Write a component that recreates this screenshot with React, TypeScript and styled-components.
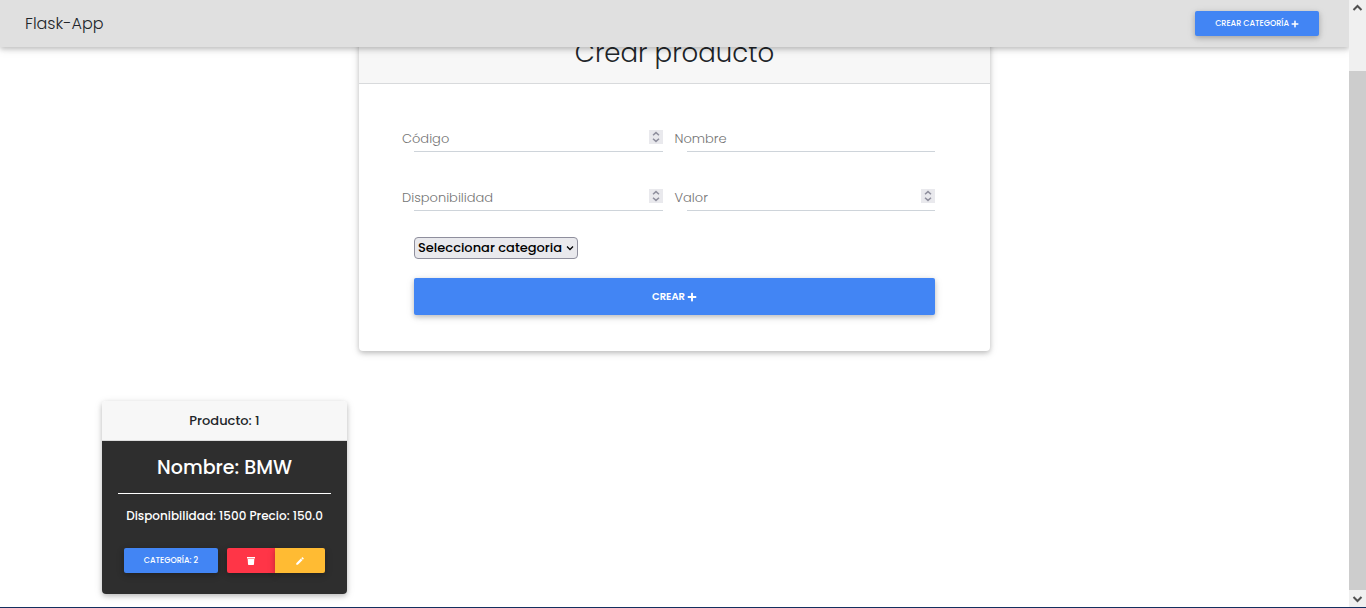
import React from "react";
import styled, { createGlobalStyle, css } from "styled-components";
import { FaPlus } from "react-icons/fa";
import { MdEdit } from "react-icons/md";

const GlobalStyle = createGlobalStyle`
  *, *::before, *::after { box-sizing: border-box; }
  body {
    margin: 0;
    background: #fff;
    color: #212529;
    font-family: Poppins, Inter, "Open Sans", sans-serif;
    font-size: 13px;
    font-weight: 300;
  }
  h1, h2, h3, p { margin: 0; }
`;

const shadow = css`
  box-shadow: 0 2px 5px 0 rgba(0, 0, 0, 0.2), 0 2px 10px 0 rgba(0, 0, 0, 0.1);
`;

const Page = styled.div`
  display: flex;
  min-height: 100vh;
  border-bottom: 1px solid #14305f;
`;

const Content = styled.div`
  flex: 1;
  min-width: 0;
`;

const Navbar = styled.header`
  position: sticky;
  top: 0;
  z-index: 2;
  display: flex;
  align-items: center;
  justify-content: space-between;
  height: 47px;
  padding: 0 30px 0 25px;
  background: #e0e0e0;
  ${shadow}
`;

const Brand = styled.a`
  color: #212529;
  font-size: 16px;
  line-height: 24px;
  text-decoration: none;
`;

const tones = { primary: "#4285f4", danger: "#ff3547", warning: "#ffbb33" };

const Button = styled.button<{ $tone?: keyof typeof tones; $block?: boolean }>`
  display: flex;
  align-items: center;
  justify-content: center;
  gap: 2px;
  width: ${(p) => (p.$block ? "100%" : "auto")};
  height: ${(p) => (p.$block ? 37 : 25)}px;
  padding: 0 20px;
  border: 0;
  border-radius: 2px;
  background: ${(p) => tones[p.$tone ?? "primary"]};
  color: #fff;
  font: inherit;
  font-size: ${(p) => (p.$block ? 10 : 8)}px;
  font-weight: ${(p) => (p.$block ? 600 : 500)};
  line-height: 16px;
  white-space: nowrap;
  cursor: pointer;
  ${shadow}
`;

const Main = styled.main`
  margin-top: -24px;
  padding: 0 24px 13px;
`;

const FormCard = styled.section`
  max-width: 631px;
  margin: 0 auto;
  border-radius: 4px;
  background: #fff;
  ${shadow}
`;

const FormHeader = styled.div`
  padding: 12px 20px;
  border-bottom: 1px solid #d8dadc;
  background: #f7f7f7;
  text-align: center;
`;

const Title = styled.h1`
  font-size: 26px;
  font-weight: 300;
  line-height: 36px;
`;

const Form = styled.form`
  display: grid;
  grid-template-columns: minmax(0, 1fr) minmax(0, 1fr);
  column-gap: 24px;
  row-gap: 30px;
  padding: 39px 55px 36px;
`;

const Field = styled.div`
  display: flex;
  align-items: center;
  height: 29px;
  border-bottom: 1px solid #ced4da;
`;

const Label = styled.label`
  margin-left: -12px;
  padding-top: 3px;
  color: #757575;
  line-height: 20px;
`;

const Input = styled.input`
  flex: 1;
  width: 0;
  min-width: 0;
  height: 28px;
  padding: 0 8px;
  border: 0;
  outline: 0;
  background: transparent;
  font: inherit;
  appearance: textfield;
  &::-webkit-inner-spin-button { display: none; }
`;

const Spinner = styled.svg`
  flex: none;
  width: 14px;
  height: 14px;
  background: #e9e9ed;
`;

const Actions = styled.div`
  grid-column: 1 / -1;
  display: flex;
  flex-direction: column;
  align-items: flex-start;
  gap: 19px;
  margin-top: -4px;
`;

const SelectBox = styled.div`
  display: grid;
  align-items: center;
  width: 164px;
  height: 22px;
  border: 1px solid #8f8f9d;
  border-radius: 4px;
  background: #e9e9ed;
  & > * { grid-area: 1 / 1; }
  & > svg {
    justify-self: end;
    margin-right: 3px;
    pointer-events: none;
  }
`;

const Select = styled.select`
  width: 100%;
  height: 20px;
  padding: 0 3px 1px;
  border: 0;
  appearance: none;
  background: transparent;
  color: #000;
  font: inherit;
  font-weight: 500;
`;

const Products = styled.div`
  display: flex;
  flex-wrap: wrap;
  gap: 24px;
  max-width: 1145px;
  margin: 50px auto 0;
`;

const ProductCard = styled.article`
  width: 245px;
  border-radius: 4px;
  color: #fff;
  text-align: center;
  ${shadow}
`;

const ProductHeader = styled.h2`
  padding-top: 1px;
  border-bottom: 1px solid #dcdcdc;
  border-radius: 4px 4px 0 0;
  background: #f7f7f7;
  color: #212529;
  font-size: 13px;
  font-weight: 500;
  line-height: 38px;
`;

const ProductBody = styled.div`
  padding: 12px 16px 21px;
  border-radius: 0 0 4px 4px;
  background: #2e2e2e;
`;

const ProductName = styled.h3`
  padding-bottom: 10px;
  border-bottom: 1px solid #fff;
  font-size: 19px;
  font-weight: 500;
  line-height: 30px;
`;

const ProductInfo = styled.p`
  margin: 12px 0 22px;
  font-size: 12px;
  font-weight: 500;
  line-height: 20px;
  white-space: nowrap;
`;

const ProductActions = styled.div`
  display: flex;
  justify-content: center;
  gap: 9px;
`;

const ButtonGroup = styled.div`
  display: flex;
  & > :first-child { border-radius: 2px 0 0 2px; }
  & > :last-child { border-radius: 0 2px 2px 0; }
`;

const Scrollbar = styled.div`
  position: relative;
  z-index: 3;
  display: flex;
  flex-direction: column;
  flex: none;
  width: 17px;
  background: #f0f0f0;
`;

const ScrollArrow = styled.svg`
  width: 17px;
  height: 17px;
`;

const ScrollThumb = styled.div`
  flex: 1;
  margin-top: 54px;
  background: #cdcdcd;
`;

type FormFieldProps = { id: string; label: string; numeric?: boolean };

function FormField({ id, label, numeric }: FormFieldProps) {
  return (
    <Field>
      <Label htmlFor={id}>{label}</Label>
      <Input id={id} type={numeric ? "number" : "text"} />
      {numeric && (
        <Spinner viewBox="0 0 14 14" fill="none" stroke="#8f8f9d" strokeWidth="1.5" aria-hidden>
          <path d="M4 5.200 7 2.600 10 5.200M4 8.800 7 11.400 10 8.800" />
        </Spinner>
      )}
    </Field>
  );
}

function TrashIcon() {
  return (
    <svg width="8" height="8" viewBox="0 0 8 8" fill="#fff" aria-hidden>
      <path d="M0 0h8v1.500H0zM.7 2h6.600L7 7.300a.7.7 0 0 1-.7.7H1.700a.7.7 0 0 1-.7-.7z" />
    </svg>
  );
}

export default function App() {
  return (
    <>
      <GlobalStyle />
      <Page>
        <Content>
          <Navbar>
            <Brand href="#">Flask-App</Brand>
            <Button type="button">CREAR CATEGORÍA <FaPlus size={8} /></Button>
          </Navbar>
          <Main>
            <FormCard>
              <FormHeader><Title>Crear producto</Title></FormHeader>
              <Form>
                <FormField id="codigo" label="Código" numeric />
                <FormField id="nombre" label="Nombre" />
                <FormField id="disponibilidad" label="Disponibilidad" numeric />
                <FormField id="valor" label="Valor" numeric />
                <Actions>
                  <SelectBox>
                    <Select aria-label="Categoria">
                      <option>Seleccionar categoria</option>
                    </Select>
                    <svg width="8" height="8" viewBox="0 0 8 8" fill="none" stroke="#000" strokeWidth="1.3" aria-hidden>
                      <path d="M1 2.5 4 5.5 7 2.5" />
                    </svg>
                  </SelectBox>
                  <Button type="button" $block>CREAR <FaPlus size={10} /></Button>
                </Actions>
              </Form>
            </FormCard>
            <Products>
              <ProductCard>
                <ProductHeader>Producto: 1</ProductHeader>
                <ProductBody>
                  <ProductName>Nombre: BMW</ProductName>
                  <ProductInfo>Disponibilidad: 1500 Precio: 150.0</ProductInfo>
                  <ProductActions>
                    <Button type="button">CATEGORÍA: 2</Button>
                    <ButtonGroup>
                      <Button type="button" $tone="danger" aria-label="Eliminar"><TrashIcon /></Button>
                      <Button type="button" $tone="warning" aria-label="Editar"><MdEdit size={10} /></Button>
                    </ButtonGroup>
                  </ProductActions>
                </ProductBody>
              </ProductCard>
            </Products>
          </Main>
        </Content>
        <Scrollbar aria-hidden>
          <ScrollArrow viewBox="0 0 17 17" fill="none" stroke="#505050" strokeWidth="2">
            <path d="M4.500 10 8.500 6 12.500 10" />
          </ScrollArrow>
          <ScrollThumb />
          <ScrollArrow viewBox="0 0 17 17" fill="none" stroke="#505050" strokeWidth="2">
            <path d="M4.500 7 8.500 11 12.500 7" />
          </ScrollArrow>
        </Scrollbar>
      </Page>
    </>
  );
}
